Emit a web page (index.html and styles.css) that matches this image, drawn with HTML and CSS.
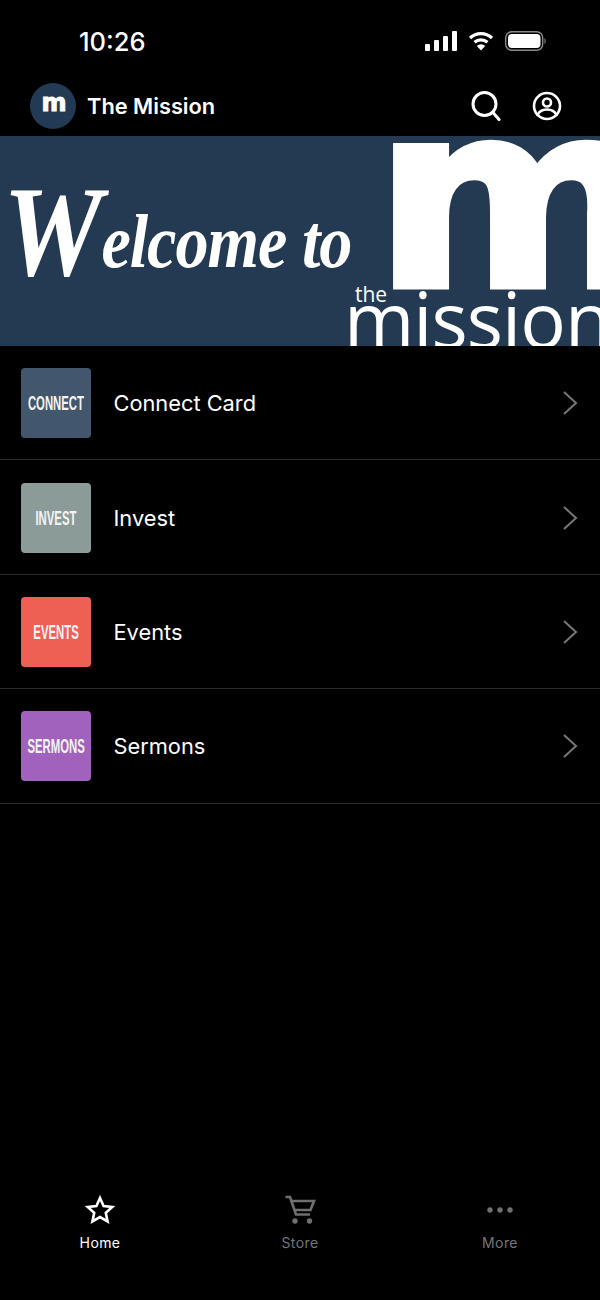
FILE: index.html
```html
<!DOCTYPE html>
<html lang="en">
<head>
    <meta charset="UTF-8">
    <meta name="viewport" content="width=device-width, initial-scale=1.0">
    <title>The Mission</title>
    <link rel="stylesheet" href="styles.css">
</head>
<body>
    <div class="app">
        <div class="status-bar">
            <span class="clock">10:26</span>
            <div class="status-icons">
                <svg width="32" height="20" viewBox="0 0 32 20"><rect x="0" y="13" width="5" height="7" rx="1"/><rect x="9" y="9" width="5" height="11" rx="1"/><rect x="18" y="5" width="5" height="15" rx="1"/><rect x="27" y="0" width="5" height="20" rx="1"/></svg>
                <svg width="26" height="20" viewBox="0 0 26 20"><path d="M2 7 A16 16 0 0 1 24 7" class="wifi"/><path d="M6.5 11.2 A10 10 0 0 1 19.500 11.200" class="wifi"/><path d="M13 19.500 L8.800 14.900 A6 6 0 0 1 17.200 14.900 Z"/></svg>
                <svg width="42" height="20" viewBox="0 0 42 20"><rect x="0.7" y="0.700" width="37" height="18.600" rx="6" class="batt-line"/><rect x="3" y="3" width="32.500" height="14" rx="4"/><path d="M39.500 7 C41 7.500 41 12.500 39.500 13 Z" class="batt-cap"/></svg>
            </div>
        </div>

        <header class="top-bar">
            <div class="brand">
                <div class="avatar">m</div>
                <span class="brand-name">The Mission</span>
            </div>
            <div class="top-actions">
                <svg width="30" height="30" viewBox="0 0 30 30" class="line-icon"><circle cx="13.500" cy="13" r="11.500"/><path d="M22 21.500 L28 28.500"/></svg>
                <svg width="30" height="30" viewBox="0 0 30 30" class="line-icon thin"><circle cx="15" cy="15" r="13"/><circle cx="15" cy="11.500" r="4"/><path d="M5.500 24 C7.500 19.500 11 18.500 15 18.500 C19 18.500 22.500 19.500 24.500 24"/></svg>
            </div>
        </header>

        <div class="banner">
            <span class="welcome"><span class="welcome-cap">W</span>elcome to</span>
            <span class="big-m">m</span>
            <span class="the">the</span>
            <span class="mission">mission</span>
        </div>

        <ul class="menu">
            <li class="menu-row">
                <div class="tile tile-connect"><span>CONNECT</span></div>
                <span class="menu-label">Connect Card</span>
                <svg class="chevron" width="16" height="26" viewBox="0 0 16 26"><path d="M2 2 L14 13 L2 24"/></svg>
            </li>
            <li class="menu-row">
                <div class="tile tile-invest"><span>INVEST</span></div>
                <span class="menu-label">Invest</span>
                <svg class="chevron" width="16" height="26" viewBox="0 0 16 26"><path d="M2 2 L14 13 L2 24"/></svg>
            </li>
            <li class="menu-row">
                <div class="tile tile-events"><span>EVENTS</span></div>
                <span class="menu-label">Events</span>
                <svg class="chevron" width="16" height="26" viewBox="0 0 16 26"><path d="M2 2 L14 13 L2 24"/></svg>
            </li>
            <li class="menu-row">
                <div class="tile tile-sermons"><span>SERMONS</span></div>
                <span class="menu-label">Sermons</span>
                <svg class="chevron" width="16" height="26" viewBox="0 0 16 26"><path d="M2 2 L14 13 L2 24"/></svg>
            </li>
        </ul>

        <nav class="tab-bar">
            <div class="tab active">
                <svg width="30" height="30" viewBox="0 0 30 30" class="tab-icon"><path d="M15 3 L18.600 11 L27.200 12 L20.800 17.900 L22.600 26.500 L15 22.100 L7.400 26.500 L9.200 17.900 L2.800 12 L11.400 11 Z"/></svg>
                <span>Home</span>
            </div>
            <div class="tab">
                <svg width="32" height="30" viewBox="0 0 32 30" class="tab-icon"><path d="M1.500 2 L6 2 L12 19.500 L26 19.500"/><path d="M7.500 6 L30 6 L26.500 15 L10.500 15"/><circle cx="11" cy="26" r="2.700" class="dot"/><circle cx="25.500" cy="26" r="2.700" class="dot"/></svg>
                <span>Store</span>
            </div>
            <div class="tab">
                <svg width="30" height="30" viewBox="0 0 30 30"><circle cx="5" cy="15" r="2.700" class="dot"/><circle cx="15" cy="15" r="2.700" class="dot"/><circle cx="25" cy="15" r="2.700" class="dot"/></svg>
                <span>More</span>
            </div>
        </nav>
    </div>
</body>
</html>
```

FILE: styles.css
```css
/* General Styling */
* {
    box-sizing: border-box;
}

body {
    margin: 0;
    background: #000;
    color: #fff;
    font-family: 'Inter', 'Roboto', sans-serif;
}

.app {
    width: 600px;
    height: 1300px;
    display: flex;
    flex-direction: column;
    overflow: hidden;
}

/* Status bar */
.status-bar {
    height: 68px;
    padding: 14px 53px 0 79px;
    display: flex;
    align-items: center;
    justify-content: space-between;
}

.clock {
    font-size: 25.500px;
    font-weight: 500;
}

.status-icons {
    display: flex;
    align-items: center;
    gap: 11px;
}

.status-icons svg {
    fill: #fff;
}

.status-icons .wifi {
    fill: none;
    stroke: #fff;
    stroke-width: 3.2;
}

.status-icons .batt-line {
    fill: none;
    stroke: #8a8a8a;
    stroke-width: 1.4;
}

.status-icons .batt-cap {
    fill: #8a8a8a;
}

/* Header */
.top-bar {
    height: 68px;
    padding: 7px 38px 0 30px;
    display: flex;
    align-items: center;
    justify-content: space-between;
}

.brand {
    display: flex;
    align-items: center;
    gap: 11px;
}

.avatar {
    width: 46px;
    height: 46px;
    border-radius: 50%;
    background: #223a53;
    display: flex;
    align-items: center;
    justify-content: center;
    padding: 0 0 6px 2px;
    font-family: 'DejaVu Sans', sans-serif;
    font-weight: 700;
    font-size: 24px;
    -webkit-text-stroke: 1px #fff;
}

.brand-name {
    font-size: 21.800px;
    font-weight: 600;
}

.top-actions {
    display: flex;
    align-items: center;
    gap: 31px;
}

.line-icon {
    fill: none;
    stroke: #fff;
    stroke-width: 3;
    stroke-linecap: round;
}

.line-icon.thin {
    stroke-width: 2.6;
}

/* Banner */
.banner {
    position: relative;
    height: 210px;
    background: #233a52;
    overflow: hidden;
}

.banner > span {
    position: absolute;
    white-space: nowrap;
    line-height: 1;
}

.welcome {
    left: 3px;
    top: 30px;
    font-family: 'Liberation Serif', serif;
    font-style: italic;
    font-weight: 700;
    font-size: 77px;
    letter-spacing: -1.200px;
    transform-origin: left center;
    transform: scaleX(0.86);
}

.welcome-cap {
    font-size: 130px;
    vertical-align: -8px;
}

.big-m {
    left: 374px;
    top: -66px;
    font-family: 'DejaVu Sans', sans-serif;
    font-weight: 700;
    font-size: 255px;
    -webkit-text-stroke: 7px #fff;
    transform-origin: left center;
    transform: scaleX(1.08);
}

.the {
    left: 355px;
    top: 148px;
    font-family: 'Open Sans', sans-serif;
    font-size: 21px;
}

.mission {
    left: 344px;
    top: 145px;
    font-family: 'Open Sans', sans-serif;
    font-size: 76px;
    letter-spacing: -1px;
}

/* Menu list */
.menu {
    list-style: none;
    margin: 0;
    padding: 0;
}

.menu-row {
    height: 114.400px;
    padding: 1px 22px 0 21px;
    display: flex;
    align-items: center;
    border-bottom: 1px solid #2a2a2a;
}

.tile {
    width: 70px;
    height: 70px;
    border-radius: 4px;
    display: flex;
    align-items: center;
    justify-content: center;
    font-family: 'Liberation Sans', sans-serif;
    font-weight: 700;
    font-size: 21px;
    color: #f4f4f4;
}

.tile span {
    transform: scaleX(0.54);
    white-space: nowrap;
}

.tile-connect {
    background: #42566e;
}

.tile-invest {
    background: #8b9c98;
}

.tile-events {
    background: #ee6054;
}

.tile-sermons {
    background: #a062bd;
}

.menu-label {
    flex: 1;
    margin-left: 22.500px;
    font-size: 21.800px;
}

.chevron {
    fill: none;
    stroke: #777;
    stroke-width: 2;
}

/* Bottom tabs */
.tab-bar {
    margin-top: auto;
    height: 106px;
    padding: 1px 0 38px;
    display: grid;
    grid-template-columns: repeat(3, 1fr);
}

.tab {
    display: flex;
    flex-direction: column;
    align-items: center;
    gap: 9px;
    font-size: 14px;
    letter-spacing: 0.4px;
    color: #767676;
    fill: #6f6f6f;
    stroke: #6f6f6f;
}

.tab.active {
    color: #fff;
    fill: #fff;
    stroke: #fff;
}

.tab-icon {
    fill: none;
    stroke-width: 2.600;
}

.tab-icon .dot {
    fill: #6f6f6f;
    stroke: none;
}

.tab .dot {
    stroke: none;
}
```
